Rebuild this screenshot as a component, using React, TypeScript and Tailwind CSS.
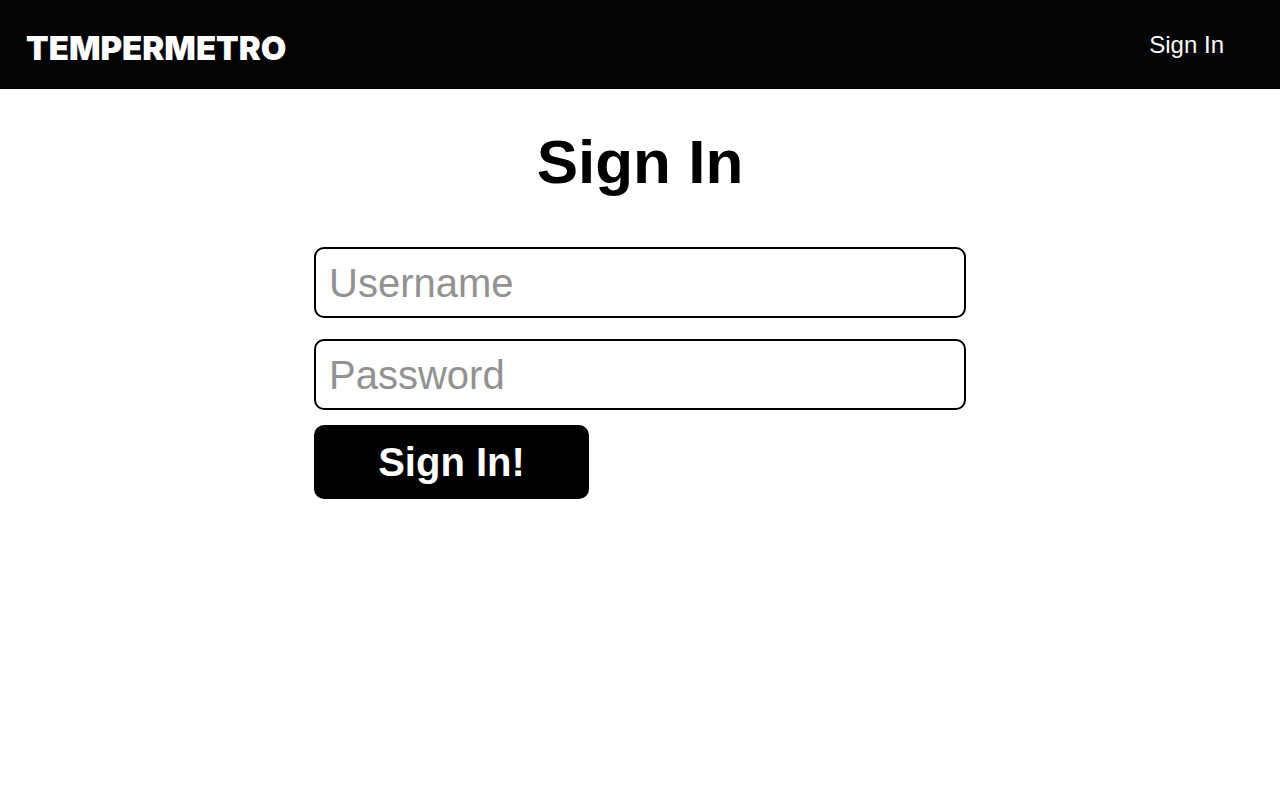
export default function App() {
  return (
    <div className="min-h-screen bg-white font-['Liberation_Sans',Arial,sans-serif] text-black">
      <header className="flex h-[89px] items-center justify-between bg-[#040404] pr-14 pl-[26px] text-white">
        <a href="#" className="pt-1.5 font-['Arial_Black','Inter',sans-serif] text-[33px] leading-10 font-black">
          TEMPERMETRO
        </a>
        <nav>
          <a href="#sign-in" className="text-2xl">Sign In</a>
        </nav>
      </header>
      <main className="mx-auto w-full max-w-[652px] pt-9">
        <h1 className="text-center text-[62px] leading-[74px] font-bold">Sign In</h1>
        <form className="mt-12 flex flex-col" onSubmit={(e) => e.preventDefault()}>
          <input
            type="text"
            aria-label="Username"
            placeholder="Username"
            className="h-[71px] w-full rounded-[10px] border-2 border-black px-[13px] pt-0.5 text-[40px] placeholder:text-[#929292]"
          />
          <input
            type="password"
            aria-label="Password"
            placeholder="Password"
            className="mt-[21px] h-[71px] w-full rounded-[10px] border-2 border-black px-[13px] pt-0.5 text-[40px] placeholder:text-[#929292]"
          />
          <button type="submit" className="mt-[15px] h-[74px] w-[275px] rounded-[10px] bg-black text-[40px] font-bold text-white">
            Sign In!
          </button>
        </form>
      </main>
    </div>
  );
}
